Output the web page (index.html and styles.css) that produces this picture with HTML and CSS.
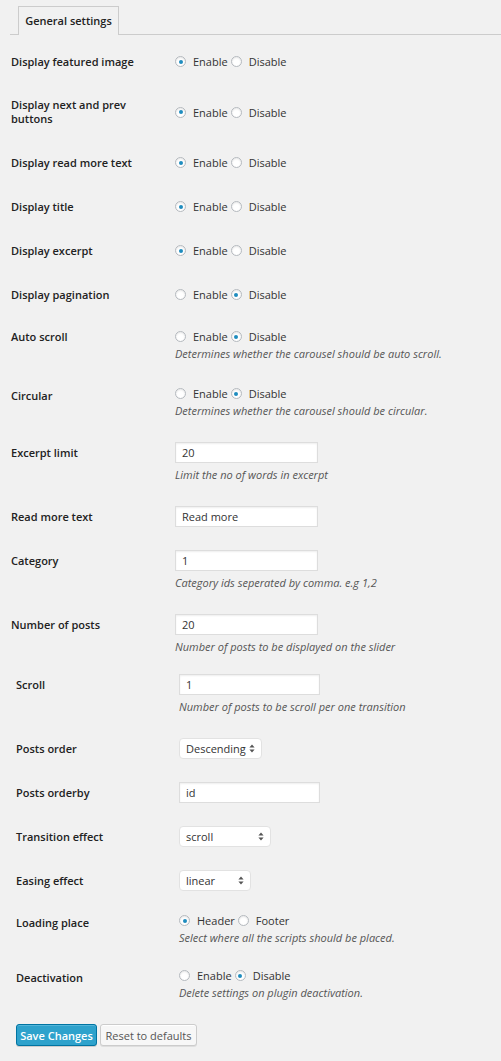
FILE: index.html
```html
<!DOCTYPE html>
<html>
<head>
<meta charset="utf-8">
<link rel="stylesheet" href="styles.css">
</head>
<body>
<div class="tabs"><div class="tab">General settings</div></div>

<div class="form s1">
  <div class="row r-radio">
    <div class="label">Display featured image</div>
    <div class="control"><div class="radios"><span class="opt"><span class="radio on"></span>Enable</span><span class="opt"><span class="radio"></span>Disable</span></div></div>
  </div>
  <div class="row r-two">
    <div class="label">Display next and prev buttons</div>
    <div class="control"><div class="radios"><span class="opt"><span class="radio on"></span>Enable</span><span class="opt"><span class="radio"></span>Disable</span></div></div>
  </div>
  <div class="row r-radio">
    <div class="label">Display read more text</div>
    <div class="control"><div class="radios"><span class="opt"><span class="radio on"></span>Enable</span><span class="opt"><span class="radio"></span>Disable</span></div></div>
  </div>
  <div class="row r-radio">
    <div class="label">Display title</div>
    <div class="control"><div class="radios"><span class="opt"><span class="radio on"></span>Enable</span><span class="opt"><span class="radio"></span>Disable</span></div></div>
  </div>
  <div class="row r-radio">
    <div class="label">Display excerpt</div>
    <div class="control"><div class="radios"><span class="opt"><span class="radio on"></span>Enable</span><span class="opt"><span class="radio"></span>Disable</span></div></div>
  </div>
  <div class="row r-radio">
    <div class="label">Display pagination</div>
    <div class="control"><div class="radios"><span class="opt"><span class="radio"></span>Enable</span><span class="opt"><span class="radio on"></span>Disable</span></div></div>
  </div>
  <div class="row r-desc">
    <div class="label">Auto scroll</div>
    <div class="control"><div class="radios"><span class="opt"><span class="radio"></span>Enable</span><span class="opt"><span class="radio on"></span>Disable</span></div>
    <p class="desc">Determines whether the carousel should be auto scroll.</p></div>
  </div>
  <div class="row r-desc">
    <div class="label lower">Circular</div>
    <div class="control"><div class="radios"><span class="opt"><span class="radio"></span>Enable</span><span class="opt"><span class="radio on"></span>Disable</span></div>
    <p class="desc">Determines whether the carousel should be circular.</p></div>
  </div>
  <div class="row r-input">
    <div class="label">Excerpt limit</div>
    <div class="control"><div class="field">20</div><p class="desc">Limit the no of words in excerpt</p></div>
  </div>
  <div class="row r-input">
    <div class="label">Read more text</div>
    <div class="control"><div class="field">Read more</div></div>
  </div>
  <div class="row r-input">
    <div class="label">Category</div>
    <div class="control"><div class="field">1</div><p class="desc">Category ids seperated by comma. e.g 1,2</p></div>
  </div>
  <div class="row r-input">
    <div class="label">Number of posts</div>
    <div class="control"><div class="field">20</div><p class="desc">Number of posts to be displayed on the slider</p></div>
  </div>
</div>

<div class="form s2">
  <div class="row r-input">
    <div class="label">Scroll</div>
    <div class="control"><div class="field wide">1</div><p class="desc">Number of posts to be scroll per one transition</p></div>
  </div>
  <div class="row r-input">
    <div class="label">Posts order</div>
    <div class="control"><div class="select w-order">Descending<svg class="arrows" width="6" height="9" viewBox="0 0 6 9"><path d="M3 0.5 L5.6 3.6 H0.4 Z M3 8.5 L5.6 5.4 H0.4 Z" fill="#555"/></svg></div></div>
  </div>
  <div class="row r-input">
    <div class="label">Posts orderby</div>
    <div class="control"><div class="field wide">id</div></div>
  </div>
  <div class="row r-input">
    <div class="label">Transition effect</div>
    <div class="control"><div class="select w-trans">scroll<svg class="arrows" width="6" height="9" viewBox="0 0 6 9"><path d="M3 0.5 L5.6 3.6 H0.4 Z M3 8.5 L5.6 5.4 H0.4 Z" fill="#555"/></svg></div></div>
  </div>
  <div class="row r-input">
    <div class="label">Easing effect</div>
    <div class="control"><div class="select w-ease">linear<svg class="arrows" width="6" height="9" viewBox="0 0 6 9"><path d="M3 0.5 L5.6 3.6 H0.4 Z M3 8.5 L5.6 5.4 H0.4 Z" fill="#555"/></svg></div></div>
  </div>
  <div class="row r-desc">
    <div class="label lower">Loading place</div>
    <div class="control"><div class="radios"><span class="opt"><span class="radio on"></span>Header</span><span class="opt"><span class="radio"></span>Footer</span></div>
    <p class="desc">Select where all the scripts should be placed.</p></div>
  </div>
  <div class="row r-desc">
    <div class="label lower">Deactivation</div>
    <div class="control"><div class="radios"><span class="opt"><span class="radio"></span>Enable</span><span class="opt"><span class="radio on"></span>Disable</span></div>
    <p class="desc">Delete settings on plugin deactivation.</p></div>
  </div>
</div>

<div class="actions">
  <button class="btn primary">Save Changes</button>
  <button class="btn">Reset to defaults</button>
</div>
</body>
</html>
```

FILE: styles.css
```css
html, body {
  margin: 0;
  padding: 0;
  background: #f1f1f1;
}
body {
  font-family: "Open Sans", "DejaVu Sans", sans-serif;
  font-size: 11px;
  color: #444;
  width: 501px;
  height: 1061px;
  overflow: hidden;
}

.tabs {
  margin: 6px 0 0 10px;
  padding-left: 8px;
  border-bottom: 1px solid #ccc;
  display: flex;
}
.tab {
  width: 99px;
  height: 27px;
  border: 1px solid #ccc;
  border-bottom: none;
  margin-bottom: -1px;
  background: #f1f1f1;
  box-sizing: content-box;
  display: flex;
  align-items: center;
  justify-content: center;
  font-weight: 600;
  font-size: 11px;
  color: #222;
  padding-bottom: 1px;
}

.form {
  display: flex;
  flex-direction: column;
  gap: 23px;
}
.s1 {
  padding: 16px 0 0 11px;
}
.s1 .label { width: 164px; }
.s2 {
  padding: 19px 0 0 16px;
}
.s2 .label { width: 163px; }
.s2 .r-desc { margin-top: -2px; }

.row {
  display: flex;
  align-items: flex-start;
}
.label {
  flex: none;
  font-weight: 600;
  color: #222;
  line-height: 17px;
  padding-right: 10px;
  box-sizing: border-box;
}
.control {
  display: flex;
  flex-direction: column;
  align-items: flex-start;
}

.r-radio .label { padding-top: 2px; }
.r-radio .radios { height: 21px; }
.r-two { align-items: center; min-height: 34px; }
.r-two .label { line-height: 14px; padding-right: 40px; }
.r-two .radios { height: 21px; }
.r-desc .radios { height: 17px; }
.r-desc .label.lower { padding-top: 2px; }
.r-input .label { padding-top: 2px; }

.radios {
  display: flex;
  align-items: center;
  color: #333;
}
.opt {
  display: inline-flex;
  align-items: center;
  margin-right: 3px;
}
.radio {
  width: 9px;
  height: 9px;
  border: 1px solid #b4b9be;
  border-radius: 50%;
  background: #fff;
  box-shadow: inset 0 1px 2px rgba(0,0,0,0.1);
  margin-right: 7px;
  position: relative;
  flex: none;
}
.radio.on::after {
  content: "";
  position: absolute;
  left: 2.5px;
  top: 2.5px;
  width: 4px;
  height: 4px;
  border-radius: 50%;
  background: #1e8cbe;
}

.desc {
  margin: 0;
  font-style: italic;
  color: #555;
  line-height: 17px;
}
.r-input .desc { margin-top: 3px; }

.field {
  width: 143px;
  height: 21px;
  box-sizing: border-box;
  background: #fff;
  border: 1px solid #ddd;
  box-shadow: inset 0 1px 2px rgba(0,0,0,0.07);
  padding: 0 6px;
  line-height: 19px;
  color: #333;
}
.field.wide { width: 141px; }

.select {
  position: relative;
  height: 21px;
  box-sizing: border-box;
  background: #fff;
  border: 1px solid #e2e2e2;
  border-radius: 4px;
  padding: 0 6px;
  line-height: 19px;
  color: #333;
}
.w-order { width: 83px; }
.w-trans { width: 92px; }
.w-ease { width: 72px; }
.arrows {
  position: absolute;
  right: 6px;
  top: 5px;
}

.actions {
  display: flex;
  gap: 3px;
  padding: 23px 0 0 16px;
}
.btn {
  font-family: "Open Sans", "DejaVu Sans", sans-serif;
  font-size: 11px;
  height: 22px;
  padding: 0;
  white-space: nowrap;
  text-align: center;
  border: 1px solid #ccc;
  border-radius: 3px;
  background: #f7f7f7;
  color: #555;
  box-shadow: inset 0 1px 0 #fff, 0 1px 0 rgba(0,0,0,0.08);
  margin: 0;
}
.btn.primary {
  background: #2ea2cc;
  border-color: #0074a2;
  color: #fff;
  font-weight: 600;
  box-shadow: inset 0 1px 0 rgba(120,200,230,0.5), 0 1px 0 rgba(0,0,0,0.15);
  width: 81px;
}
.btn:not(.primary) { width: 97px; }
```
